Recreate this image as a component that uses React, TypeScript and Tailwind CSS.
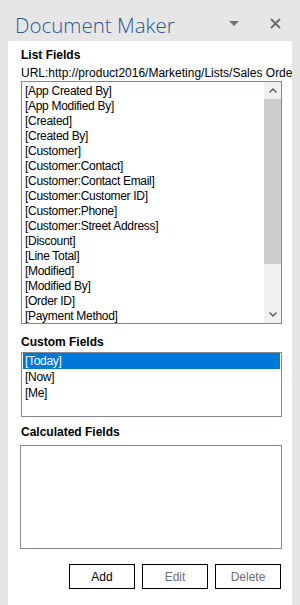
import React from "react";

const listFields = [
  "[App Created By]",
  "[App Modified By]",
  "[Created]",
  "[Created By]",
  "[Customer]",
  "[Customer:Contact]",
  "[Customer:Contact Email]",
  "[Customer:Customer ID]",
  "[Customer:Phone]",
  "[Customer:Street Address]",
  "[Discount]",
  "[Line Total]",
  "[Modified]",
  "[Modified By]",
  "[Order ID]",
  "[Payment Method]",
];

const customFields = ["[Today]", "[Now]", "[Me]"];

function Label({ children }: { children: React.ReactNode }) {
  return <div className="text-[12px] font-bold leading-[15px] text-black">{children}</div>;
}

export default function App() {
  return (
    <div
      className="flex h-[605px] w-[300px] flex-col overflow-hidden bg-[#e6e6e6]"
      style={{ fontFamily: '"Liberation Sans", Arial, sans-serif' }}
    >
      {/* Task pane header */}
      <div className="flex h-[41px] shrink-0 items-start pt-[11px]">
        <div
          className="ml-[15px] flex-1 text-[20.5px] font-light leading-[28px] text-[#2b579a]"
          style={{ fontFamily: '"Open Sans", sans-serif' }}
        >
          Document Maker
        </div>
        <svg className="mt-[10px]" width="10" height="5" viewBox="0 0 10 5">
          <path d="M0 0 L10 0 L5 5 Z" fill="#707070" />
        </svg>
        <svg className="ml-[31px] mr-[19px] mt-[7px]" width="11" height="11" viewBox="0 0 11 11">
          <path d="M1 1 L10 10 M10 1 L1 10" stroke="#6a6a6a" strokeWidth="1.8" />
        </svg>
      </div>

      <div className="flex min-h-0 flex-1">
        <div className="ml-[8px] w-[284px] overflow-hidden whitespace-nowrap bg-white pl-[13px] pt-[7px]">
          <Label>List Fields</Label>
          <div className="mt-[3px] text-[12px] leading-[15px] text-black">
            URL:http://product2016/Marketing/Lists/Sales Orders
          </div>

          {/* List fields listbox */}
          <div className="flex h-[243px] w-[261px] border border-[#828790] bg-white">
            <div className="flex-1 overflow-hidden pl-[3px] pt-[2px]">
              {listFields.map((f) => (
                <div key={f} className="text-[12px] leading-[15px] tracking-[-0.3px] text-black">
                  {f}
                </div>
              ))}
            </div>
            <div className="flex w-[17px] flex-col bg-[#f0f0f0]">
              <div className="flex h-[17px] items-center justify-center">
                <svg width="8" height="5" viewBox="0 0 8 5">
                  <path d="M0.5 4.5 L4 1 L7.5 4.5" stroke="#606060" strokeWidth="1.5" fill="none" />
                </svg>
              </div>
              <div className="h-[165px] bg-[#cdcdcd]" />
              <div className="flex-1" />
              <div className="flex h-[17px] items-center justify-center">
                <svg width="8" height="5" viewBox="0 0 8 5">
                  <path d="M0.5 0.5 L4 4 L7.5 0.5" stroke="#606060" strokeWidth="1.5" fill="none" />
                </svg>
              </div>
            </div>
          </div>

          <div className="mt-[11px]">
            <Label>Custom Fields</Label>
          </div>
          <div className="mt-[2px] h-[65px] w-[261px] border border-[#828790] bg-white pr-[1px]">
            {customFields.map((f, i) => (
              <div
                key={f}
                className={`ml-[1px] h-[16px] pl-[2px] text-[12px] leading-[16px] tracking-[-0.3px] ${
                  i === 0 ? "bg-[#0078d7] text-white" : "text-black"
                }`}
              >
                {f}
              </div>
            ))}
          </div>

          <div className="mt-[8px]">
            <Label>Calculated Fields</Label>
          </div>
          <div className="-ml-px mt-[5px] h-[104px] w-[262px] border border-[#828790] bg-white" />

          <div className="mt-[15px] flex w-[260px] justify-end gap-[7px]">
            <button className="h-[25px] w-[66px] border border-black bg-white text-[12px] text-black">
              Add
            </button>
            <button className="h-[25px] w-[66px] border border-black bg-white text-[12px] text-[#6d6d6d]">
              Edit
            </button>
            <button className="h-[25px] w-[66px] border border-black bg-white text-[12px] text-[#6d6d6d]">
              Delete
            </button>
          </div>
        </div>
        <div className="w-[8px]" />
      </div>
    </div>
  );
}
